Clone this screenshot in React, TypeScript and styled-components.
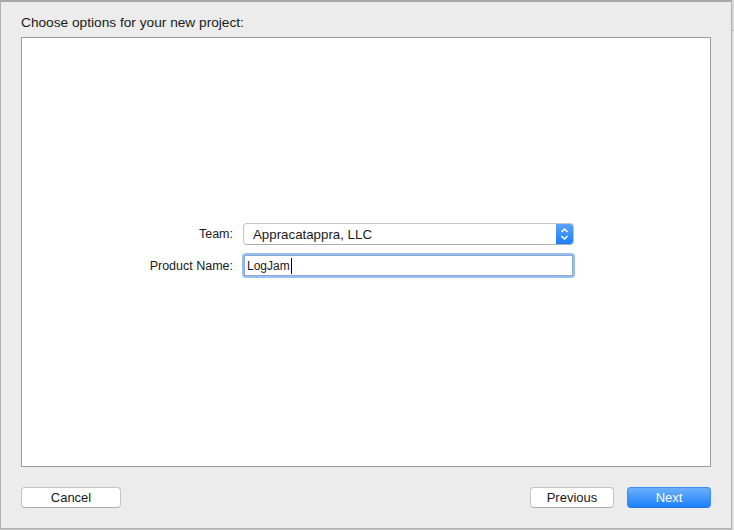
import React from "react";
import styled, { createGlobalStyle } from "styled-components";

const GlobalStyle = createGlobalStyle`
  html, body {
    margin: 0;
    padding: 0;
    background: #dedede;
    font-family: "Liberation Sans", Arial, sans-serif;
    -webkit-font-smoothing: antialiased;
  }
`;

const Page = styled.div`
  width: 734px;
  height: 530px;
  display: flex;
  background: linear-gradient(#dcdcdc 0, #dcdcdc 30px, #c4c4c4 30px, #c4c4c4 31px, #e4e4e4 31px);
`;

const Sheet = styled.div`
  box-sizing: border-box;
  width: 732px;
  height: 529px;
  background: #ececec;
  border: 1px solid #b0b0b0;
  border-top: 2px solid #a8a8a8;
  box-shadow: 0 1px 1px rgba(0, 0, 0, 0.15);
  display: flex;
  flex-direction: column;
  padding: 0 20px 0 20px;
`;

const Title = styled.div`
  font-size: 13.7px;
  line-height: 16px;
  color: #1a1a1a;
  margin-top: 13px;
  margin-bottom: 6px;
`;

const ContentBox = styled.div`
  height: 430px;
  box-sizing: border-box;
  background: #ffffff;
  border: 1px solid #9c9c9c;
  display: flex;
  align-items: center;
`;

const Form = styled.div`
  display: grid;
  grid-template-columns: 211px 331px;
  column-gap: 10px;
  row-gap: 8px;
  align-items: center;
  margin-top: -3px;
`;

const Label = styled.div`
  font-size: 12.5px;
  color: #1a1a1a;
  text-align: right;
`;

const Popup = styled.div`
  box-sizing: border-box;
  height: 22px;
  width: 331px;
  border: 1px solid #c6c6c6;
  border-bottom-color: #adadad;
  border-radius: 4px;
  background: #fff;
  display: flex;
  align-items: center;
  overflow: hidden;
`;

const PopupText = styled.div`
  flex: 1;
  font-size: 13.3px;
  color: #1a1a1a;
  padding-left: 9px;
`;

const Stepper = styled.div`
  width: 17px;
  height: 100%;
  background: linear-gradient(#5aa3fb, #1c7ff7);
  display: flex;
  align-items: center;
  justify-content: center;
`;

const FieldRing = styled.div`
  box-sizing: border-box;
  width: 333px;
  margin-left: -1px;
  padding: 2px;
  border-radius: 4px;
  background: #94bff5;
`;

const Field = styled.div`
  box-sizing: border-box;
  height: 21px;
  background: #fff;
  border: 1px solid #8fa9cc;
  display: flex;
  align-items: center;
  font-size: 12px;
  color: #1a1a1a;
  padding-left: 2px;
`;

const Caret = styled.span`
  display: inline-block;
  width: 1px;
  height: 16px;
  background: #000;
  margin-left: 1px;
`;

const Footer = styled.div`
  display: flex;
  align-items: center;
  margin-top: 20px;
`;

const Spacer = styled.div`
  flex: 1;
`;

const Button = styled.button<{ $primary?: boolean; $width: number }>`
  box-sizing: border-box;
  width: ${(p) => p.$width}px;
  height: 21px;
  font-family: "Liberation Sans", Arial, sans-serif;
  font-size: 13px;
  padding: 0;
  border-radius: 4px;
  color: ${(p) => (p.$primary ? "#ffffff" : "#1a1a1a")};
  border: 1px solid ${(p) => (p.$primary ? "#3b8cf5" : "#c4c4c4")};
  border-bottom-color: ${(p) => (p.$primary ? "#2a74de" : "#aeaeae")};
  background: ${(p) =>
    p.$primary ? "linear-gradient(#6cb0fc, #1b80f9)" : "#ffffff"};
  margin-left: ${(p) => (p.$primary ? "13px" : "0")};
`;

function Chevrons() {
  return (
    <svg width="9" height="14" viewBox="0 0 9 14">
      <path d="M1.5 5 L4.5 2 L7.5 5" fill="none" stroke="#fff" strokeWidth="1.5" />
      <path d="M1.5 9 L4.5 12 L7.5 9" fill="none" stroke="#fff" strokeWidth="1.5" />
    </svg>
  );
}

export default function App() {
  return (
    <Page>
      <GlobalStyle />
      <Sheet>
        <Title>Choose options for your new project:</Title>
        <ContentBox>
          <Form>
            <Label>Team:</Label>
            <Popup>
              <PopupText>Appracatappra, LLC</PopupText>
              <Stepper>
                <Chevrons />
              </Stepper>
            </Popup>
            <Label>Product Name:</Label>
            <FieldRing>
              <Field>
                LogJam
                <Caret />
              </Field>
            </FieldRing>
          </Form>
        </ContentBox>
        <Footer>
          <Button $width={100}>Cancel</Button>
          <Spacer />
          <Button $width={84}>Previous</Button>
          <Button $primary $width={84}>Next</Button>
        </Footer>
      </Sheet>
    </Page>
  );
}
